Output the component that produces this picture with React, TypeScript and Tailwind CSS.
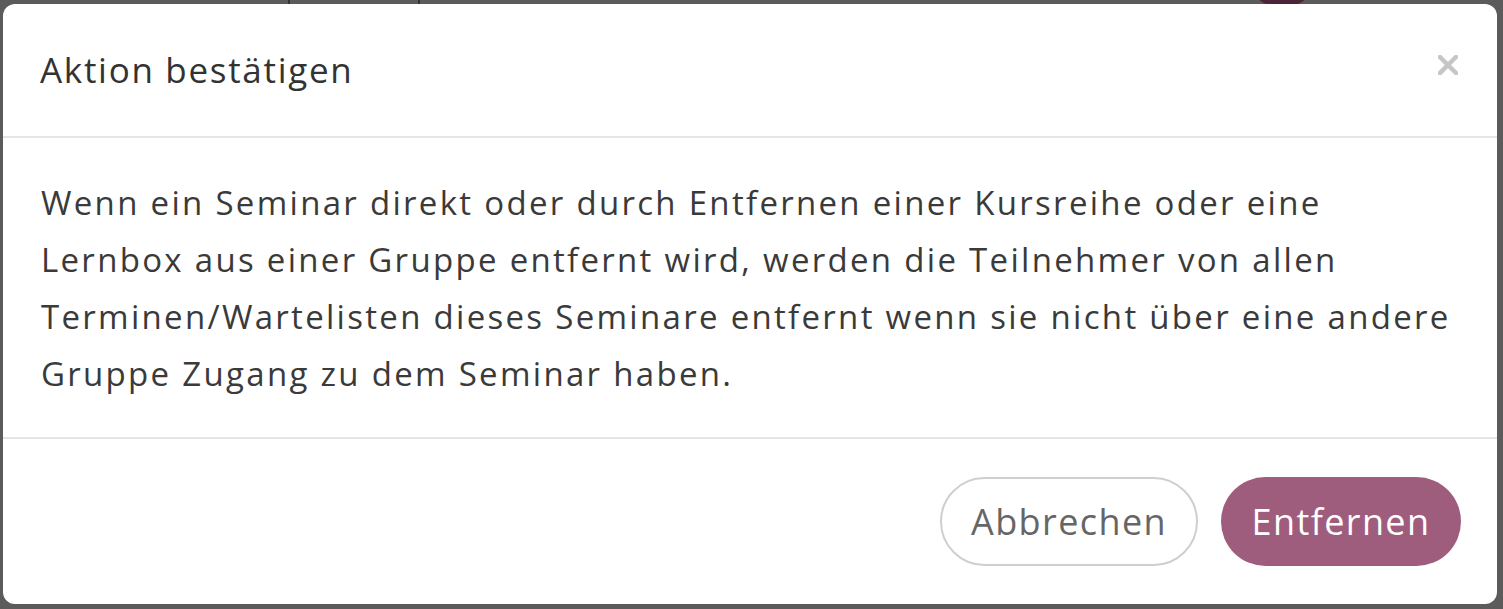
const App = () => {
	return (
		<div className="relative h-[609px] w-[1503px] overflow-hidden bg-[#5b5b5b] font-['Open_Sans',sans-serif]">
			{/* dimmed page behind the overlay */}
			<div className="absolute left-[1252px] top-[-40px] h-[46px] w-[60px] rounded-full bg-[#4b2437]"></div>
			<div className="absolute left-[288px] top-0 h-[4px] w-[2px] bg-[#333]"></div>
			<div className="absolute left-[418px] top-0 h-[4px] w-[2px] bg-[#333]"></div>

			<div className="relative ml-[3px] mt-[4px] flex h-[600px] w-[1494px] flex-col rounded-[12px] bg-white">
				<header className="flex h-[134px] items-center justify-between border-b-2 border-[#e5e5e5] pl-[37px] pr-[39px]">
					<h1 className="text-[35px] tracking-[1.7px] text-[#333]">
						Aktion bestätigen
					</h1>
					<button className="-mt-[10px] text-[#c6c6c6]">
						<svg width={20} height={20} viewBox="0 0 20 20">
							<path
								d="M2 2 L18 18 M18 2 L2 18"
								stroke="currentColor"
								strokeWidth={4.5}
								strokeLinecap="square"
							/>
						</svg>
					</button>
				</header>
				<section className="flex-1 border-b-2 border-[#e5e5e5] pl-[38px] pr-[20px] pt-[36px]">
					<p className="text-[33px] leading-[57px] tracking-[2.3px] whitespace-nowrap text-[#3a3a3a]">
						Wenn ein Seminar direkt oder durch Entfernen einer
						Kursreihe oder eine
						<br />
						Lernbox aus einer Gruppe entfernt wird, werden die
						Teilnehmer von allen
						<br />
						Terminen/Wartelisten dieses Seminare entfernt wenn sie
						nicht über eine andere
						<br />
						Gruppe Zugang zu dem Seminar haben.
					</p>
				</section>
				<footer className="flex h-[165px] items-center justify-end gap-[23px] pr-[36px]">
					<button className="h-[89px] w-[258px] rounded-full border-2 border-[#cfcfcf] text-[36px] tracking-[1.4px] text-[#666]">
						Abbrechen
					</button>
					<button className="h-[89px] w-[240px] rounded-full bg-[#9f5d7d] text-[36px] tracking-[1.4px] text-white">
						Entfernen
					</button>
				</footer>
			</div>
		</div>
	)
}

export default App
